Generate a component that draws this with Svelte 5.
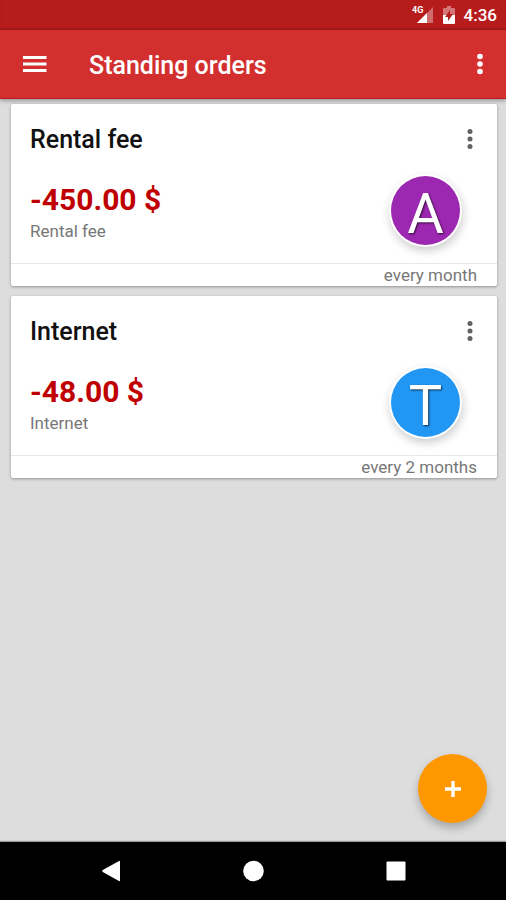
<script>
  const orders = [
    { title: 'Rental fee', amount: '-450.00 $', category: 'Rental fee', letter: 'A', color: '#9c27b0', interval: 'every month' },
    { title: 'Internet', amount: '-48.00 $', category: 'Internet', letter: 'T', color: '#2196f3', interval: 'every 2 months' }
  ]
</script>

<div class="screen">
  <div class="status">
    <svg width="22" height="20" viewBox="0 0 22 20">
      <text x="0" y="8" class="network">4G</text>
      <path d="M21 2v16H5z" fill="#fff" fill-opacity="0.35" />
      <path d="M15 8v10H5z" fill="#fff" />
    </svg>
    <svg width="12" height="18" viewBox="0 0 12 18">
      <path d="M4 0h4v2h3q1 0 1 1v6H0V3q0-1 1-1h3z" fill="#fff" fill-opacity="0.4" />
      <path d="M0 9h12v8q0 1-1 1H1q-1 0-1-1z" fill="#fff" />
      <path d="M7 4v4h3l-5 7v-4H2z" fill="#b71c1c" />
    </svg>
    <span>4:36</span>
  </div>

  <header>
    <button class="icon" aria-label="Open menu">
      <svg width="24" height="18" viewBox="0 0 24 18" fill="#fff">
        <path d="M0 1h23.500v3H0zM0 7.500h23.500v3H0zM0 14h23.500v3H0z" />
      </svg>
    </button>
    <h1>Standing orders</h1>
    <button class="icon" aria-label="More options">
      <svg width="6" height="22" viewBox="0 0 6 22" fill="#fff">
        <circle cx="3" cy="3.500" r="2.800" />
        <circle cx="3" cy="11" r="2.800" />
        <circle cx="3" cy="18.500" r="2.800" />
      </svg>
    </button>
  </header>

  <main>
    {#each orders as order}
      <article>
        <div class="top">
          <h2>{order.title}</h2>
          <button class="icon" aria-label="Options for {order.title}">
            <svg width="6" height="22" viewBox="0 0 6 22" fill="#616161">
              <circle cx="3" cy="3.500" r="2.500" />
              <circle cx="3" cy="11" r="2.500" />
              <circle cx="3" cy="18.500" r="2.500" />
            </svg>
          </button>
        </div>
        <div class="details">
          <div>
            <p class="amount">{order.amount}</p>
            <p class="category">{order.category}</p>
          </div>
          <div class="avatar" style="background-color: {order.color}">{order.letter}</div>
        </div>
        <footer>{order.interval}</footer>
      </article>
    {/each}
    <button class="add" aria-label="Add standing order">
      <svg width="18" height="18" viewBox="0 0 18 18" fill="#fff">
        <path d="M7.300 1h3.400v6.300H17v3.400h-6.300V17H7.300v-6.300H1V7.300h6.300z" />
      </svg>
    </button>
  </main>

  <nav>
    <button class="icon" aria-label="Back">
      <svg width="22" height="22" viewBox="0 0 22 22" fill="#fff">
        <path d="M21 1.500v19q0 1-1 .5L3.800 12q-1.300-1 0-2L20 1q1-.5 1 .5z" />
      </svg>
    </button>
    <button class="icon" aria-label="Home">
      <svg width="22" height="22" viewBox="0 0 22 22" fill="#fff">
        <circle cx="11.500" cy="11" r="10.300" />
      </svg>
    </button>
    <button class="icon" aria-label="Recent apps">
      <svg width="22" height="22" viewBox="0 0 22 22" fill="#fff">
        <rect x="1.500" y="1.500" width="19" height="19" rx="1" />
      </svg>
    </button>
  </nav>
</div>

<style>
  :global(body) {
    margin: 0;
  }
  .screen {
    display: flex;
    flex-direction: column;
    min-height: 100vh;
    background-color: #ddd;
    font-family: Roboto, sans-serif;
  }
  h1,
  h2,
  p {
    margin: 0;
    font-weight: 500;
  }
  svg {
    display: block;
  }
  .icon {
    padding: 0;
    border: none;
    background: none;
    cursor: pointer;
  }
  .status {
    display: flex;
    align-items: center;
    justify-content: flex-end;
    gap: 9px;
    height: 30px;
    padding-right: 9px;
    background-color: #b71c1c;
    box-shadow: inset 0 -2px 2px rgba(0, 0, 0, 0.12);
    color: #fff;
    font-size: 17px;
    font-weight: 500;
    line-height: 32px;
  }
  .network {
    fill: #fff;
    font-size: 9px;
    font-weight: 700;
  }
  header {
    display: flex;
    align-items: center;
    height: 69px;
    padding: 0 23px;
    background-color: #d32f2f;
    color: #fff;
    border-bottom: 1px solid #c01818;
    box-shadow: 0 2px 4px rgba(0, 0, 0, 0.3);
    box-sizing: border-box;
  }
  h1 {
    flex: 1;
    padding: 3px 0 0 42px;
    font-size: 25px;
    line-height: 32px;
  }
  main {
    display: flex;
    flex: 1;
    flex-direction: column;
    gap: 10px;
    padding: 5px 9px 19px 11px;
  }
  article {
    background-color: #fff;
    border-radius: 2px;
    box-shadow: 0 1px 3px rgba(0, 0, 0, 0.35);
  }
  .top {
    display: flex;
    align-items: center;
    justify-content: space-between;
    height: 70px;
    padding: 0 24px 0 19px;
  }
  h2 {
    padding-top: 2px;
    color: #111;
    font-size: 25px;
    line-height: 32px;
  }
  .details {
    display: flex;
    justify-content: space-between;
    height: 89px;
    padding: 0 37px 0 19px;
  }
  .amount {
    padding-top: 8px;
    color: #c00000;
    font-size: 30px;
    font-weight: 700;
    line-height: 36px;
  }
  .category {
    color: #777;
    font-size: 17px;
    font-weight: 400;
    line-height: 26px;
  }
  .avatar {
    width: 69px;
    height: 69px;
    margin-top: 2px;
    border-radius: 50%;
    box-shadow: 0 0 0 2px #fff, 1px 4px 10px 2px rgba(0, 0, 0, 0.2);
    color: #fff;
    font-size: 56px;
    line-height: 76px;
    text-align: center;
    text-shadow: 1px 1px 2px rgba(0, 0, 0, 0.7);
  }
  footer {
    padding-right: 20px;
    border-top: 1px solid #e8e8e8;
    color: #777;
    font-size: 17px;
    line-height: 22px;
    text-align: right;
  }
  .add {
    display: flex;
    align-items: center;
    justify-content: center;
    width: 69px;
    height: 69px;
    margin: auto 10px 0 auto;
    padding: 0;
    border: none;
    border-radius: 50%;
    background-color: #ff9800;
    box-shadow: 0 5px 8px rgba(0, 0, 0, 0.25);
    cursor: pointer;
  }
  nav {
    display: flex;
    align-items: center;
    justify-content: center;
    gap: 121px;
    height: 58px;
    background-color: #000;
    box-shadow: 0 -1px 1px rgba(0, 0, 0, 0.3);
  }
</style>
